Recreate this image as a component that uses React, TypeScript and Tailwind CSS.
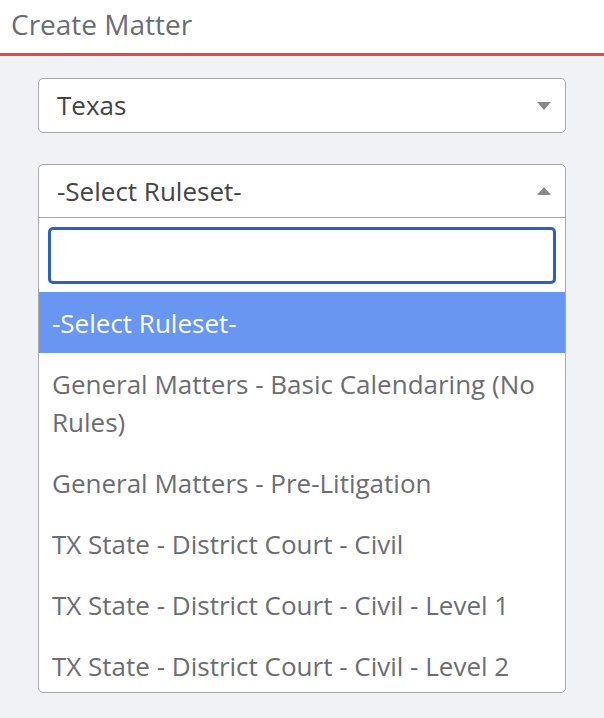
const options = [
  '-Select Ruleset-',
  'General Matters - Basic Calendaring (No Rules)',
  'General Matters - Pre-Litigation',
  'TX State - District Court - Civil',
  'TX State - District Court - Civil - Level 1',
  'TX State - District Court - Civil - Level 2',
];

function Caret({ up }: { up?: boolean }) {
  return (
    <svg width="14" height="8" viewBox="0 0 14 8" className="text-[#888888]">
      {up ? <path d="M0 8 L7 0 L14 8 Z" fill="currentColor" /> : <path d="M0 0 L14 0 L7 8 Z" fill="currentColor" />}
    </svg>
  );
}

export default function App() {
  return (
    <div className="w-[604px] h-[718px] overflow-hidden bg-[#f1f2f6] font-['Open_Sans',sans-serif]">
      {/* Header */}
      <div className="h-[53px] bg-white border-b-[3px] border-[#d65343] box-content px-[11px] flex items-center">
        <h1 className="text-[28px] text-[#6b6c71] leading-none -mt-[5px]">Create Matter</h1>
      </div>

      <div className="px-[38px] pt-[22px]">
        {/* State select */}
        <div className="h-[55px] bg-white border border-[#aaaaaa] rounded-[5px] flex items-center justify-between pl-[18px] pr-[14px]">
          <span className="text-[26px] text-[#444444]">Texas</span>
          <Caret />
        </div>

        {/* Ruleset select (open) */}
        <div className="mt-[31px] bg-white border border-[#aaaaaa] rounded-[5px] overflow-hidden">
          <div className="h-[53px] border-b border-[#aaaaaa] flex items-center justify-between pl-[18px] pr-[14px]">
            <span className="text-[26px] text-[#444444]">-Select Ruleset-</span>
            <Caret up />
          </div>
          <div className="px-[9px] pt-[9px] pb-[8px]">
            <input className="w-full h-[57px] border-[3px] border-[#2d5fc6] rounded-[5px] outline-none" />
          </div>
          <div className="h-[400px] overflow-hidden">
            {options.map((o, i) => (
              <div
                key={o}
                className={
                  'px-[13px] py-[11.5px] text-[26px] leading-[38px] ' +
                  (i === 0 ? 'bg-[#6896f1] text-white' : 'text-[#6c6d72]')
                }
              >
                {o}
              </div>
            ))}
          </div>
        </div>
      </div>
    </div>
  );
}
